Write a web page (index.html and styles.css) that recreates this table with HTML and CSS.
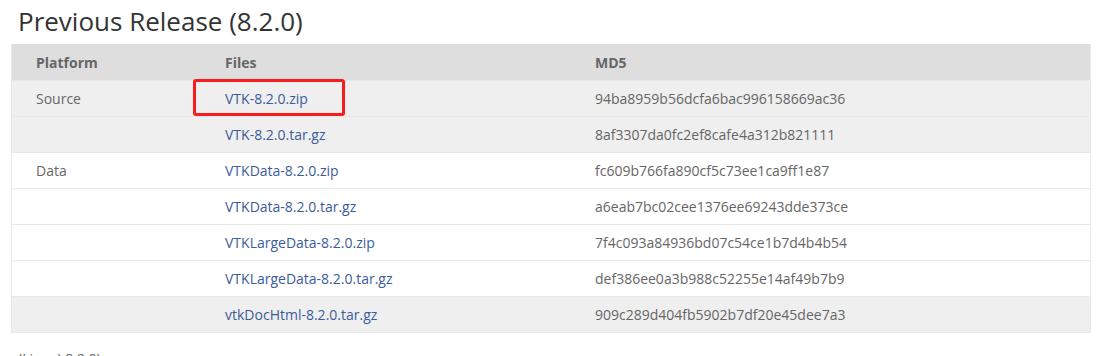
FILE: index.html
```html
<!DOCTYPE html>
<html>
<head>
<meta charset="utf-8">
<link rel="stylesheet" href="styles.css">
</head>
<body>
<div class="page">
  <h2 class="title">Previous Release (8.2.0)</h2>
  <div class="table">
    <div class="row head">
      <div class="cell">Platform</div>
      <div class="cell">Files</div>
      <div class="cell">MD5</div>
    </div>
    <div class="row shade">
      <div class="cell">Source</div>
      <div class="cell"><a class="link marked" href="#">VTK-8.2.0.zip<span class="mark"></span></a></div>
      <div class="cell">94ba8959b56dcfa6bac996158669ac36</div>
    </div>
    <div class="row shade">
      <div class="cell"></div>
      <div class="cell"><a class="link" href="#">VTK-8.2.0.tar.gz</a></div>
      <div class="cell">8af3307da0fc2ef8cafe4a312b821111</div>
    </div>
    <div class="row">
      <div class="cell">Data</div>
      <div class="cell"><a class="link" href="#">VTKData-8.2.0.zip</a></div>
      <div class="cell">fc609b766fa890cf5c73ee1ca9ff1e87</div>
    </div>
    <div class="row">
      <div class="cell"></div>
      <div class="cell"><a class="link" href="#">VTKData-8.2.0.tar.gz</a></div>
      <div class="cell">a6eab7bc02cee1376ee69243dde373ce</div>
    </div>
    <div class="row">
      <div class="cell"></div>
      <div class="cell"><a class="link" href="#">VTKLargeData-8.2.0.zip</a></div>
      <div class="cell">7f4c093a84936bd07c54ce1b7d4b4b54</div>
    </div>
    <div class="row">
      <div class="cell"></div>
      <div class="cell"><a class="link" href="#">VTKLargeData-8.2.0.tar.gz</a></div>
      <div class="cell">def386ee0a3b988c52255e14af49b7b9</div>
    </div>
    <div class="row shade">
      <div class="cell"></div>
      <div class="cell"><a class="link" href="#">vtkDocHtml-8.2.0.tar.gz</a></div>
      <div class="cell">909c289d404fb5902b7df20e45dee7a3</div>
    </div>
  </div>
  <p class="note">(Linux) 8.2.0)</p>
</div>
</body>
</html>
```

FILE: styles.css
```css
html, body {
  margin: 0;
  padding: 0;
  background: #fff;
}
.page {
  padding: 0 16px 0 11px;
  font-family: "Open Sans", "Liberation Sans", sans-serif;
  color: #666;
}
.title {
  margin: 4px 0 5px 7px;
  font-size: 26px;
  line-height: 35px;
  font-weight: 400;
  color: #333;
}
.table {
  width: 1080px;
  border: 1px solid #e9e9e9;
  border-top: 0;
  box-sizing: border-box;
}
.row {
  display: grid;
  grid-template-columns: 189px 370px 1fr;
  height: 36px;
  align-items: center;
  border-top: 1px solid #e8e8e8;
  box-sizing: border-box;
  font-size: 14px;
}
.row.head {
  background: #dedede;
  font-weight: 700;
  border-top: 0;
}
.row.shade {
  background: #efefef;
}
.cell {
  padding-left: 24px;
  white-space: nowrap;
}
.link {
  color: #3b5b9c;
  text-decoration: none;
}
.marked {
  position: relative;
}
.mark {
  position: absolute;
  left: -32px;
  top: -10px;
  width: 146px;
  height: 31px;
  border: 3px solid #fa1c1c;
  border-radius: 3px;
}
.note {
  margin: 16px 0 0 7px;
  font-size: 14px;
  color: #666;
}
```
